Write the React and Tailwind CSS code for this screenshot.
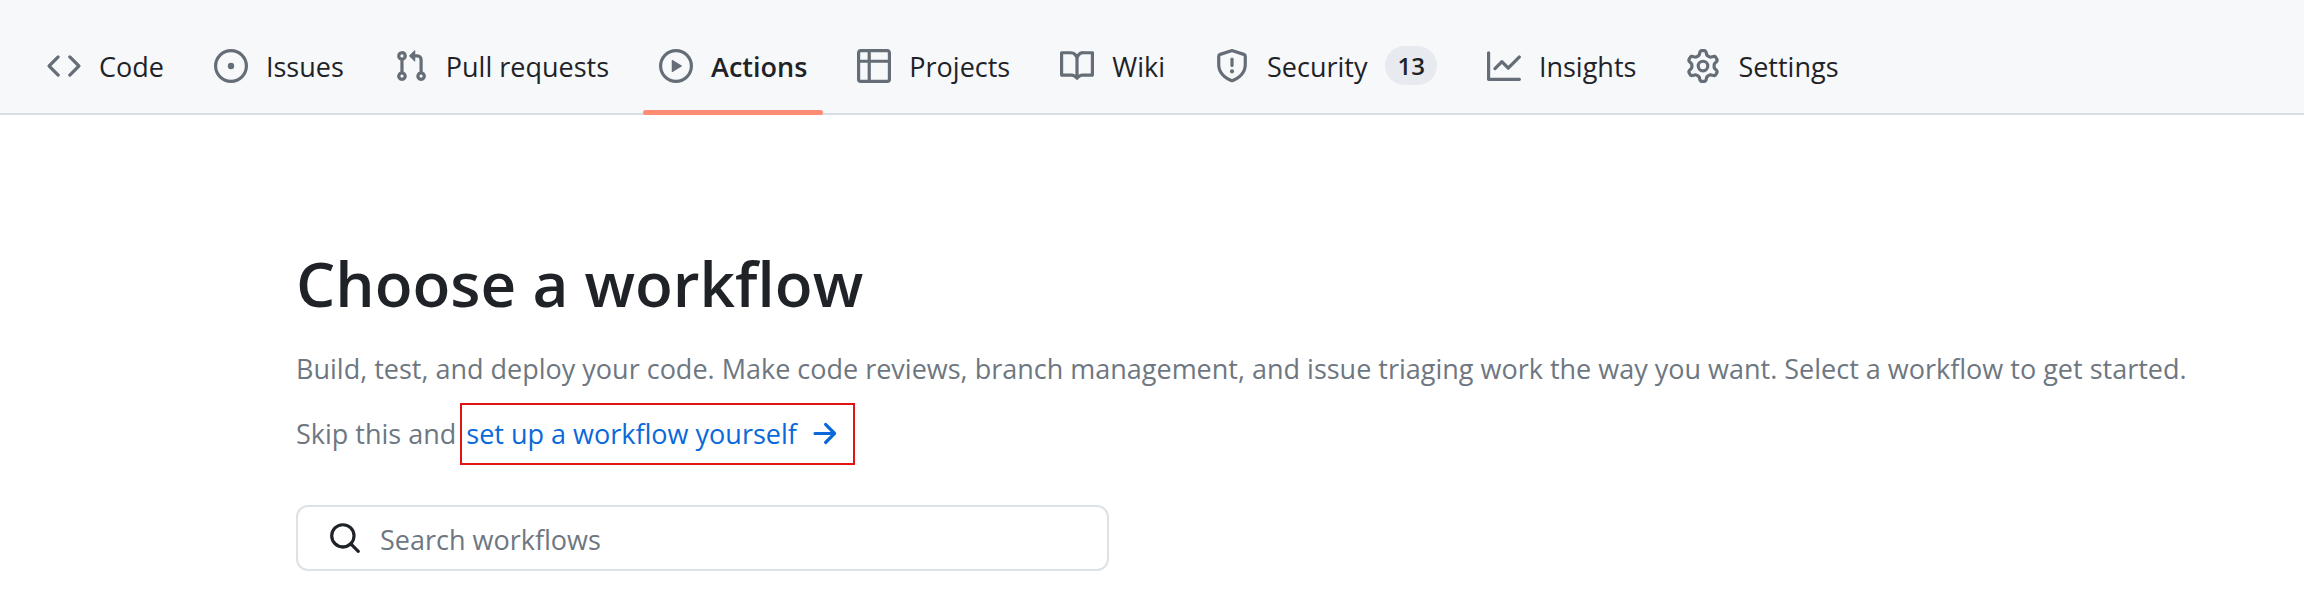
import React from "react";

const icons = {
  code: "M4.72 3.22a.75.75 0 0 1 1.06 1.06L2.06 8l3.72 3.72a.75.75 0 1 1-1.06 1.06L.47 8.53a.75.75 0 0 1 0-1.06l4.25-4.25Zm6.56 0a.75.75 0 1 0-1.06 1.06L13.94 8l-3.72 3.72a.75.75 0 1 0 1.06 1.06l4.25-4.25a.75.75 0 0 0 0-1.06l-4.25-4.25Z",
  issue:
    "M8 9.5a1.5 1.5 0 1 0 0-3 1.5 1.5 0 0 0 0 3ZM8 0a8 8 0 1 1 0 16A8 8 0 0 1 8 0ZM1.5 8a6.5 6.5 0 1 0 13 0 6.5 6.5 0 0 0-13 0Z",
  pull: "M1.5 3.25a2.25 2.25 0 1 1 3 2.122v5.256a2.251 2.251 0 1 1-1.5 0V5.372A2.25 2.25 0 0 1 1.5 3.25Zm5.677-.177L9.573.677A.25.25 0 0 1 10 .854V2.5h1A2.5 2.5 0 0 1 13.5 5v5.628a2.251 2.251 0 1 1-1.5 0V5a1 1 0 0 0-1-1h-1v1.646a.25.25 0 0 1-.427.177L7.177 3.427a.25.25 0 0 1 0-.354ZM3.75 2.5a.75.75 0 1 0 0 1.5.75.75 0 0 0 0-1.5Zm0 9.5a.75.75 0 1 0 0 1.5.75.75 0 0 0 0-1.5Zm8.25.75a.75.75 0 1 0 1.5 0 .75.75 0 0 0-1.5 0Z",
  play: "M8 0a8 8 0 1 1 0 16A8 8 0 0 1 8 0ZM1.5 8a6.5 6.5 0 1 0 13 0 6.5 6.5 0 0 0-13 0Zm4.879-2.773 4.264 2.559a.25.25 0 0 1 0 .428l-4.264 2.559A.25.25 0 0 1 6 10.559V5.442a.25.25 0 0 1 .379-.215Z",
  table:
    "M0 1.75C0 .784.784 0 1.75 0h12.5C15.216 0 16 .784 16 1.75v12.5A1.75 1.75 0 0 1 14.25 16H1.75A1.75 1.75 0 0 1 0 14.25ZM6.5 6.5v8h7.75a.25.25 0 0 0 .25-.25V6.5Zm8-1.5V1.75a.25.25 0 0 0-.25-.25H6.5V5Zm-13 1.5v7.75c0 .138.112.25.25.25H5v-8ZM5 5V1.5H1.75a.25.25 0 0 0-.25.25V5Z",
  book: "M0 1.75A.75.75 0 0 1 .75 1h4.253c1.227 0 2.317.59 3 1.501A3.743 3.743 0 0 1 11.006 1h4.245a.75.75 0 0 1 .75.75v10.5a.75.75 0 0 1-.75.75h-4.507a2.25 2.25 0 0 0-1.591.659l-.622.621a.75.75 0 0 1-1.06 0l-.622-.621A2.25 2.25 0 0 0 5.258 13H.75a.75.75 0 0 1-.75-.75Zm7.251 10.324.004-5.073-.002-2.253A2.25 2.25 0 0 0 5.003 2.5H1.5v9h3.757a3.75 3.75 0 0 1 1.994.574ZM8.755 4.75l-.004 7.322a3.752 3.752 0 0 1 1.992-.572H14.5v-9h-3.495a2.25 2.25 0 0 0-2.25 2.25Z",
  shield:
    "M7.467.133a1.748 1.748 0 0 1 1.066 0l5.25 1.68A1.75 1.75 0 0 1 15 3.48V7c0 1.566-.32 3.182-1.303 4.682-.983 1.498-2.585 2.813-5.032 3.855a1.697 1.697 0 0 1-1.33 0c-2.447-1.042-4.049-2.357-5.032-3.855C1.32 10.182 1 8.566 1 7V3.48a1.755 1.755 0 0 1 1.217-1.667Zm.61 1.429a.25.25 0 0 0-.153 0l-5.25 1.68a.25.25 0 0 0-.174.238V7c0 1.358.275 2.666 1.057 3.86.784 1.194 2.121 2.34 4.366 3.297a.196.196 0 0 0 .154 0c2.245-.956 3.582-2.104 4.366-3.298C13.225 9.666 13.5 8.36 13.5 7V3.48a.251.251 0 0 0-.174-.237l-5.25-1.68ZM8.75 4.75v3a.75.75 0 0 1-1.5 0v-3a.75.75 0 0 1 1.5 0ZM9 10.5a1 1 0 1 1-2 0 1 1 0 0 1 2 0Z",
  graph:
    "M1.5 1.75V13.5h13.75a.75.75 0 0 1 0 1.5H.75a.75.75 0 0 1-.75-.75V1.75a.75.75 0 0 1 1.5 0Zm14.28 2.53-5.25 5.25a.75.75 0 0 1-1.06 0L7 7.06 4.28 9.78a.751.751 0 0 1-1.042-.018.751.751 0 0 1-.018-1.042l3.25-3.25a.75.75 0 0 1 1.06 0L10 7.94l4.72-4.72a.751.751 0 0 1 1.042.018.751.751 0 0 1 .018 1.042Z",
  gear: "M8 0a8.2 8.2 0 0 1 .701.031C9.444.095 9.99.645 10.16 1.29l.288 1.107c.018.066.079.158.212.224.231.114.454.243.668.386.123.082.233.09.299.071l1.103-.303c.644-.176 1.392.021 1.82.63.27.385.506.792.704 1.218.315.675.111 1.422-.364 1.891l-.814.806c-.049.048-.098.147-.088.294.016.257.016.515 0 .772-.01.147.038.246.088.294l.814.806c.475.469.679 1.216.364 1.891a7.977 7.977 0 0 1-.704 1.217c-.428.61-1.176.807-1.82.63l-1.102-.302c-.067-.019-.177-.011-.3.071a5.909 5.909 0 0 1-.668.386c-.133.066-.194.158-.211.224l-.29 1.106c-.168.646-.715 1.196-1.458 1.26a8.006 8.006 0 0 1-1.402 0c-.743-.064-1.289-.614-1.458-1.26l-.289-1.106c-.018-.066-.079-.158-.212-.224a5.738 5.738 0 0 1-.668-.386c-.123-.082-.233-.09-.299-.071l-1.103.303c-.644.176-1.392-.021-1.82-.63a8.12 8.12 0 0 1-.704-1.218c-.315-.675-.111-1.422.363-1.891l.815-.806c.05-.048.098-.147.088-.294a6.214 6.214 0 0 1 0-.772c.01-.147-.038-.246-.088-.294l-.815-.806C.635 6.045.431 5.298.746 4.623a7.92 7.92 0 0 1 .704-1.217c.428-.61 1.176-.807 1.82-.63l1.102.302c.067.019.177.011.3-.071.214-.143.437-.272.668-.386.133-.066.194-.158.211-.224l.29-1.106C6.009.645 6.556.095 7.299.03 7.53.01 7.764 0 8 0Zm-.571 1.525c-.036.003-.108.036-.137.146l-.289 1.105c-.147.561-.549.967-.998 1.189-.173.086-.34.183-.5.29-.417.278-.97.423-1.529.27l-1.103-.303c-.109-.03-.175.016-.195.045-.22.312-.412.644-.573.99-.014.031-.021.11.059.19l.815.806c.411.406.562.957.53 1.456a4.709 4.709 0 0 0 0 .582c.032.499-.119 1.05-.53 1.456l-.815.806c-.081.08-.073.159-.059.19.162.346.353.677.573.989.02.03.085.076.195.046l1.102-.303c.56-.153 1.113-.008 1.53.27.161.107.328.204.501.29.447.222.85.629.997 1.189l.289 1.105c.029.109.101.143.137.146a6.6 6.6 0 0 0 1.142 0c.036-.003.108-.036.137-.146l.289-1.105c.147-.561.549-.967.998-1.189.173-.086.34-.183.5-.29.417-.278.97-.423 1.529-.27l1.103.303c.109.029.175-.016.195-.045.22-.313.411-.644.573-.99.014-.031.021-.11-.059-.19l-.815-.806c-.411-.406-.562-.957-.53-1.456a4.709 4.709 0 0 0 0-.582c-.032-.499.119-1.05.53-1.456l.815-.806c.081-.08.073-.159.059-.19a6.464 6.464 0 0 0-.573-.989c-.02-.03-.085-.076-.195-.046l-1.102.303c-.56.153-1.113.008-1.53-.27a4.44 4.44 0 0 0-.501-.29c-.447-.222-.85-.629-.997-1.189l-.289-1.105c-.029-.11-.101-.143-.137-.146a6.6 6.6 0 0 0-1.142 0ZM11 8a3 3 0 1 1-6 0 3 3 0 0 1 6 0ZM9.5 8a1.5 1.5 0 1 0-3.001.001A1.5 1.5 0 0 0 9.5 8Z",
  search:
    "M10.68 11.74a6 6 0 0 1-7.922-8.982 6 6 0 0 1 8.982 7.922l3.04 3.04a.749.749 0 0 1-.326 1.275.749.749 0 0 1-.734-.215ZM11.5 7a4.499 4.499 0 1 0-8.997 0A4.499 4.499 0 0 0 11.5 7Z",
  arrow:
    "M8.22 2.97a.75.75 0 0 1 1.06 0l4.25 4.25a.75.75 0 0 1 0 1.06l-4.25 4.25a.751.751 0 0 1-1.042-.018.751.751 0 0 1-.018-1.042l2.97-2.97H3.75a.75.75 0 0 1 0-1.5h7.44L8.22 4.03a.75.75 0 0 1 0-1.06Z",
};

const tabs = [
  { label: "Code", icon: "code" },
  { label: "Issues", icon: "issue" },
  { label: "Pull requests", icon: "pull" },
  { label: "Actions", icon: "play", active: true },
  { label: "Projects", icon: "table" },
  { label: "Wiki", icon: "book" },
  { label: "Security", icon: "shield", count: 13 },
  { label: "Insights", icon: "graph" },
  { label: "Settings", icon: "gear" },
];

function Icon({ name, className }) {
  return (
    <svg
      viewBox="0 0 16 16"
      fill="currentColor"
      aria-hidden="true"
      className={`size-[34px] shrink-0 ${className || ""}`}
    >
      <path fillRule="evenodd" d={icons[name]} />
    </svg>
  );
}

function Tab({ label, icon, active, count }) {
  return (
    <a
      href="#"
      aria-current={active ? "page" : undefined}
      className="relative flex items-center gap-[18px] px-4 pt-10 pb-[22px] whitespace-nowrap"
    >
      <Icon name={icon} className="text-[#656d76]" />
      <span className={active ? "pt-[3px] font-semibold" : "pt-[3px]"}>
        {label}
      </span>
      {count && (
        <span className="rounded-full bg-[#e7ebef] px-3 text-2xl leading-[39px] font-semibold">
          {count}
        </span>
      )}
      {active && (
        <span className="absolute inset-x-0 -bottom-[2px] h-[5px] rounded-sm bg-[#fd8c73]" />
      )}
    </a>
  );
}

export default function App() {
  return (
    <div className="min-h-screen bg-white font-['Open_Sans',sans-serif] text-[27px] leading-[48px] text-[#1f2328]">
      <nav
        aria-label="Repository"
        className="flex gap-[18px] border-b-2 border-[#d8dee4] bg-[#f6f8fa] px-[31px]"
      >
        {tabs.map((tab) => (
          <Tab key={tab.label} {...tab} />
        ))}
      </nav>

      <main className="pt-[120px] pl-[296px]">
        <h1 className="text-[62px] leading-[96px] font-semibold">
          Choose a workflow
        </h1>
        <p className="mt-[14px] text-[#6e7781]">
          Build, test, and deploy your code. Make code reviews, branch
          management, and issue triaging work the way you want. Select a
          workflow to get started.
        </p>
        <p className="mt-[10px] flex items-center text-[#6e7781]">
          Skip this and
          <a
            href="#"
            className="ml-1 flex items-center gap-[10px] border-2 border-[#e11414] py-[5px] pr-3 pl-1 text-[#0969da]"
          >
            set up a workflow yourself
            <Icon name="arrow" />
          </a>
        </p>
        <label className="mt-10 flex h-[66px] w-full max-w-[813px] items-center gap-[18px] rounded-xl border-2 border-[#dde2e7] px-[30px]">
          <Icon name="search" />
          <input
            type="text"
            aria-label="Search workflows"
            placeholder="Search workflows"
            className="w-full pt-[3px] outline-none placeholder:text-[#6e7781]"
          />
        </label>
      </main>
    </div>
  );
}
